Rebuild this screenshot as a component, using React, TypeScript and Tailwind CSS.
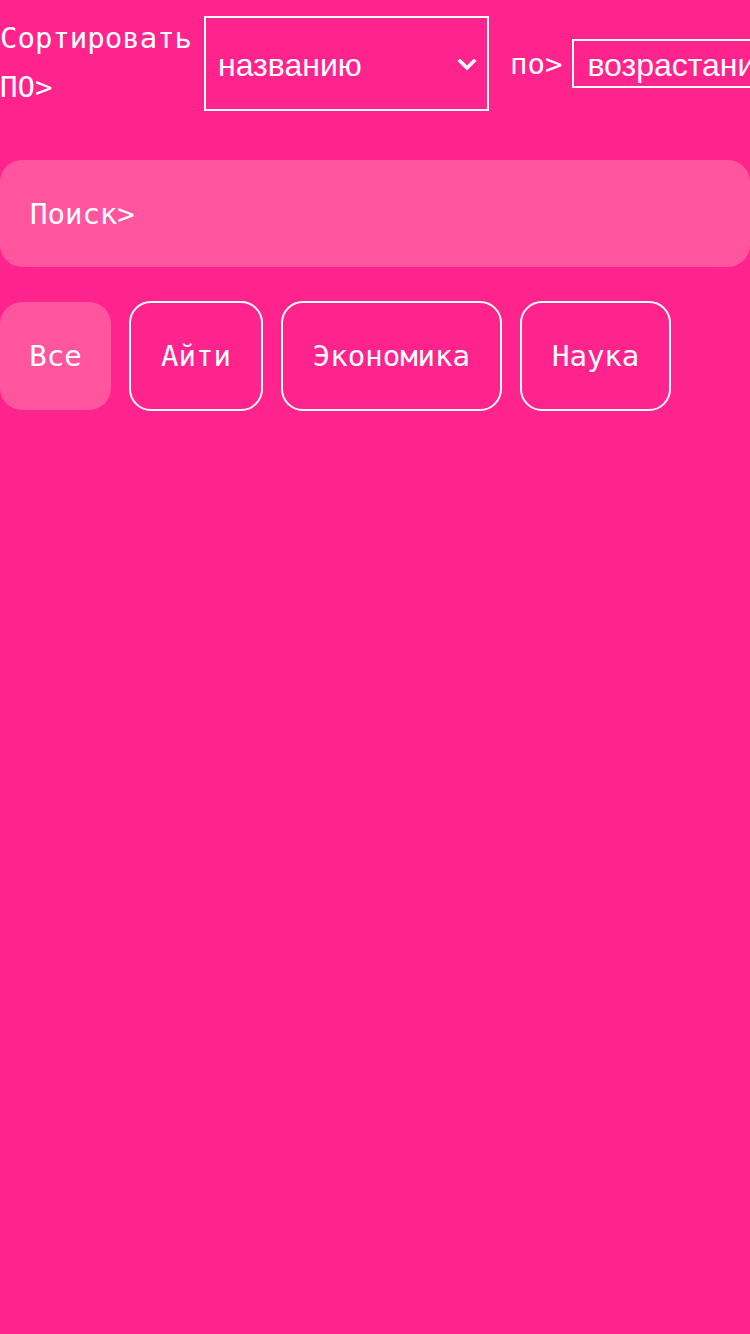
import React from "react";

const mono = { fontFamily: '"DejaVu Sans Mono", monospace' } as const;
const sans = { fontFamily: '"Liberation Sans", Arial, sans-serif' } as const;

function Chevron() {
  return (
    <svg width="20" height="12" viewBox="0 0 20 12" className="shrink-0">
      <path d="M3 2 L10 9 L17 2" stroke="white" strokeWidth="3.5" fill="none" strokeLinecap="square" />
    </svg>
  );
}

export default function App() {
  const cats = ["Все", "Айти", "Экономика", "Наука"];
  return (
    <div className="w-[750px] h-[1334px] bg-[#ff238d] text-white overflow-hidden" style={mono}>
      <div className="flex items-center pt-[14px] whitespace-nowrap">
        <div className="w-[192px] shrink-0 whitespace-normal text-[29px] leading-[49px]">
          Сортировать ПО&gt;
        </div>
        <div
          className="ml-3 w-[285px] h-[95px] shrink-0 border-2 border-white flex items-center justify-between pl-3 pr-[10px] pt-[3px] text-[32px]"
          style={sans}
        >
          <span>названию</span>
          <Chevron />
        </div>
        <div className="ml-[21px] text-[29px] shrink-0 pt-[3px]">по&gt;</div>
        <div
          className="ml-[10px] h-[49px] w-[250px] shrink-0 border-2 border-white flex items-center pl-[13px] pt-[3px] text-[32px] overflow-hidden"
          style={sans}
        >
          <span>возрастанию</span>
        </div>
      </div>

      <div className="mt-[48px] h-[107px] rounded-[22px] bg-[#ff559f] flex items-center pl-[30px] pt-[3px] text-[29px]">
        Поиск&gt;
      </div>

      <div className="mt-[34px] flex items-center gap-[18px]">
        {cats.map((c, i) => (
          <div
            key={c}
            className={
              i === 0
                ? "w-[111px] h-[108px] justify-center rounded-[22px] bg-[#ff559f] flex items-center pt-[2px] text-[29px]"
                : "h-[110px] px-[30px] rounded-[22px] border-2 border-white flex items-center pt-[2px] text-[29px]"
            }
          >
            {c}
          </div>
        ))}
      </div>
    </div>
  );
}
